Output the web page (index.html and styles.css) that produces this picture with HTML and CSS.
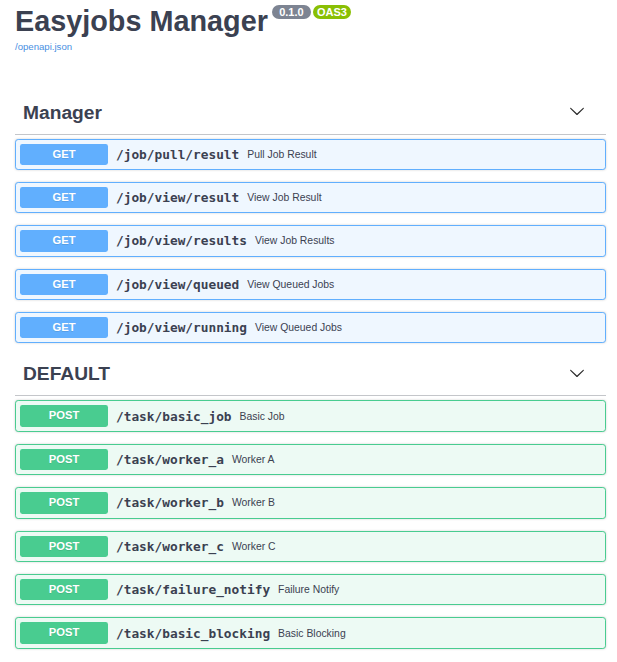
FILE: index.html
```html
<!DOCTYPE html>
<html lang="en">
<head>
<meta charset="utf-8">
<title>Easyjobs Manager</title>
<link rel="stylesheet" href="styles.css">
</head>
<body>
<div class="page">
  <header class="info">
    <h2 class="title"><span class="title-text">Easyjobs Manager</span><span class="badge badge-version">0.1.0</span><span class="badge badge-oas">OAS3</span></h2>
    <a class="spec-link" href="#">/openapi.json</a>
  </header>

  <section class="tag-section">
    <h3 class="tag"><span class="tag-name">Manager</span><span class="tag-toggle"><svg viewBox="0 0 20 20" width="16" height="16"><path d="M17.418 6.109c.272-.268.709-.268.979 0s.271.701 0 .969l-7.908 7.83c-.27.268-.707.268-.979 0l-7.908-7.830c-.27-.268-.27-.701 0-.969.271-.268.709-.268.979 0L10 13.25l7.418-7.141z"/></svg></span></h3>
    <div class="opblock opblock-get"><span class="method">GET</span><span class="path">/job/pull/result</span><span class="desc">Pull Job Result</span></div>
    <div class="opblock opblock-get"><span class="method">GET</span><span class="path">/job/view/result</span><span class="desc">View Job Result</span></div>
    <div class="opblock opblock-get"><span class="method">GET</span><span class="path">/job/view/results</span><span class="desc">View Job Results</span></div>
    <div class="opblock opblock-get"><span class="method">GET</span><span class="path">/job/view/queued</span><span class="desc">View Queued Jobs</span></div>
    <div class="opblock opblock-get"><span class="method">GET</span><span class="path">/job/view/running</span><span class="desc">View Queued Jobs</span></div>
  </section>

  <section class="tag-section">
    <h3 class="tag"><span class="tag-name">DEFAULT</span><span class="tag-toggle"><svg viewBox="0 0 20 20" width="16" height="16"><path d="M17.418 6.109c.272-.268.709-.268.979 0s.271.701 0 .969l-7.908 7.83c-.27.268-.707.268-.979 0l-7.908-7.830c-.27-.268-.27-.701 0-.969.271-.268.709-.268.979 0L10 13.25l7.418-7.141z"/></svg></span></h3>
    <div class="opblock opblock-post"><span class="method">POST</span><span class="path">/task/basic_job</span><span class="desc">Basic Job</span></div>
    <div class="opblock opblock-post"><span class="method">POST</span><span class="path">/task/worker_a</span><span class="desc">Worker A</span></div>
    <div class="opblock opblock-post"><span class="method">POST</span><span class="path">/task/worker_b</span><span class="desc">Worker B</span></div>
    <div class="opblock opblock-post"><span class="method">POST</span><span class="path">/task/worker_c</span><span class="desc">Worker C</span></div>
    <div class="opblock opblock-post"><span class="method">POST</span><span class="path">/task/failure_notify</span><span class="desc">Failure Notify</span></div>
    <div class="opblock opblock-post"><span class="method">POST</span><span class="path">/task/basic_blocking</span><span class="desc">Basic Blocking</span></div>
  </section>
</div>
</body>
</html>
```

FILE: styles.css
```css
html, body {
  margin: 0;
  padding: 0;
  background: #ffffff;
}

body {
  font-family: "Liberation Sans", Arial, sans-serif;
  color: #3b4151;
}

.page {
  padding: 0 11px 0 15px;
}

.info {
  padding-top: 4.5px;
  margin-bottom: 42px;
}

.title {
  display: flex;
  align-items: flex-start;
  margin: 0;
  font-size: 28.8px;
  font-weight: 700;
  line-height: 33px;
  color: #3b4151;
}

.badge {
  margin-top: 0.5px;
  height: 14px;
  font-size: 11px;
  line-height: 14px;
  font-weight: 700;
  color: #ffffff;
  text-align: center;
  border-radius: 46px;
}

.badge-version {
  width: 39px;
  margin-left: 4px;
  background: #7d8492;
}

.badge-oas {
  width: 38px;
  margin-left: 2px;
  background: #89bf04;
}

.spec-link {
  display: block;
  margin-top: 3px;
  font-size: 9.6px;
  line-height: 11px;
  color: #4990e2;
  text-decoration: none;
}

.tag {
  display: flex;
  align-items: flex-start;
  justify-content: space-between;
  height: 24px;
  margin: 0 0 4px;
  padding: 7px 21px 9px 8px;
  border-bottom: 1px solid rgba(59, 65, 81, 0.3);
  font-size: 19.2px;
  font-weight: 700;
  line-height: 24px;
  color: #3b4151;
}

.tag-toggle {
  display: block;
  width: 16px;
  height: 16px;
  margin-top: 2.5px;
}

.tag-toggle svg {
  display: block;
  fill: #2b2b2b;
}

.opblock {
  display: flex;
  align-items: center;
  height: 21.4px;
  margin: 0 0 12px;
  padding: 4px;
  border: 1px solid;
  border-radius: 3.2px;
  box-shadow: 0 0 2.4px rgba(0, 0, 0, 0.19);
}

.opblock-get {
  background: #eff7ff;
  border-color: #61affe;
}

.opblock-post {
  background: #edfaf4;
  border-color: #49cc90;
}

.method {
  flex: none;
  width: 88px;
  height: 21.4px;
  line-height: 21.4px;
  text-align: center;
  font-size: 11.2px;
  font-weight: 700;
  color: #ffffff;
  border-radius: 2.4px;
  text-shadow: 0 1px 0 rgba(0, 0, 0, 0.1);
}

.opblock-get .method {
  background: #61affe;
}

.opblock-post .method {
  background: #49cc90;
}

.path {
  padding: 0 8px;
  font-family: "DejaVu Sans Mono", monospace;
  font-size: 12.8px;
  font-weight: 700;
  color: #3b4151;
}

.desc {
  font-size: 10.4px;
  color: #3b4151;
}
```
